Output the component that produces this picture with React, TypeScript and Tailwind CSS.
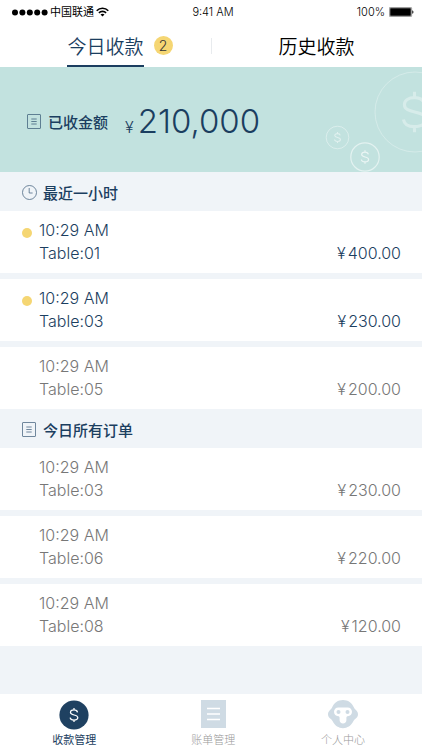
import React, { useState } from 'react';

interface Order {
  time: string;
  table: string;
  amount: string;
  isNew?: boolean;
}

const recentOrders: Order[] = [
  { time: '10:29 AM', table: 'Table:01', amount: '400.00', isNew: true },
  { time: '10:29 AM', table: 'Table:03', amount: '230.00', isNew: true },
  { time: '10:29 AM', table: 'Table:05', amount: '200.00' },
];

const todayOrders: Order[] = [
  { time: '10:29 AM', table: 'Table:03', amount: '230.00' },
  { time: '10:29 AM', table: 'Table:06', amount: '220.00' },
  { time: '10:29 AM', table: 'Table:08', amount: '120.00' },
];

const DOLLAR = 'M4.2 -3.2C3.8 -5 2.2 -6 0 -6C-2.4 -6 -4.2 -4.9 -4.2 -3C-4.2 1 4.5 -1 4.5 3.1C4.5 5 2.7 6.1 0 6.1C-2.6 6.1 -4.3 5 -4.6 3.1M0 -8.4V-6M0 6.1V8.4';

function ListIcon() {
  return (
    <svg width="14" height="15" viewBox="0 0 14 15" fill="none" stroke="currentColor" className="opacity-75" aria-hidden="true">
      <rect x="0.5" y="0.5" width="13" height="14" rx="0.5" strokeWidth="0.8" />
      <path d="M4.3 5H9.7M4.3 7.5H9.7M4.3 10H9.7" strokeWidth="0.8" />
    </svg>
  );
}

function ClockIcon() {
  return (
    <svg width="15" height="15" viewBox="0 0 15 15" fill="none" stroke="currentColor" strokeWidth="0.8" className="opacity-75" aria-hidden="true">
      <circle cx="7.5" cy="7.5" r="7" />
      <path d="M7.2 3V8H10.6" />
    </svg>
  );
}

function StatusBar() {
  return (
    <div className="grid h-6 grid-cols-3 items-center pr-2 pl-3 text-[11px] text-black">
      <div className="flex items-center gap-0.5">
        <svg width="36" height="7" viewBox="0 0 36 7" aria-hidden="true">
          {[3, 10.4, 17.8, 25.2, 32.6].map((cx) => (
            <circle key={cx} cx={cx} cy="3.5" r="3" />
          ))}
        </svg>
        <span>中国联通</span>
        <svg width="13" height="10" viewBox="0 0 13 10" fill="none" stroke="currentColor" strokeWidth="1.6" aria-hidden="true">
          <path d="M0.7 3.7C3.9 0.4 9.1 0.4 12.3 3.7M2.9 5.9C4.9 3.9 8.1 3.9 10.1 5.9" />
          <path d="M4.5 7.4C5.7 6.4 7.3 6.4 8.5 7.4L6.5 9.6Z" fill="currentColor" stroke="none" />
        </svg>
      </div>
      <span className="text-center font-light">9:41 AM</span>
      <div className="flex items-center justify-end gap-1">
        <span className="font-light">100%</span>
        <svg width="25" height="10" viewBox="0 0 25 10" aria-hidden="true">
          <rect x="0.4" y="0.4" width="22.2" height="9.2" rx="0.8" fill="none" stroke="#777" strokeWidth="0.8" />
          <rect x="1.2" y="1.2" width="20.6" height="7.6" />
          <path d="M23.3 3.2C24.8 3.6 24.8 6.4 23.3 6.8Z" />
        </svg>
      </div>
    </div>
  );
}

function CoinPattern() {
  return (
    <svg className="absolute top-0 right-0" width="100" height="105" viewBox="0 0 100 105" fill="none" stroke="#fff" aria-hidden="true">
      <circle cx="93" cy="45" r="40" strokeOpacity="0.3" />
      <path d={DOLLAR} transform="translate(92.5 45) scale(2.4)" strokeOpacity="0.35" strokeWidth="1.3" />
      <circle cx="15.5" cy="70.5" r="11.3" strokeOpacity="0.4" />
      <path d={DOLLAR} transform="translate(15.5 70.5) scale(0.65)" strokeOpacity="0.5" strokeWidth="1.7" />
      <circle cx="43" cy="90" r="14.2" strokeOpacity="0.55" strokeWidth="1.2" />
      <path d={DOLLAR} transform="translate(43 90) scale(0.8)" strokeOpacity="0.65" strokeWidth="1.5" />
    </svg>
  );
}

function SectionTitle({ icon, title }: { icon: React.ReactNode; title: string }) {
  return (
    <h2 className="flex h-[39px] items-center pt-0.5 pl-[22px] text-[15px] font-medium text-[#1b3e60]">
      <span className="w-[21px]">{icon}</span>
      <span className="pt-1">{title}</span>
    </h2>
  );
}

function OrderList({ orders }: { orders: Order[] }) {
  return (
    <ul className="flex flex-col gap-1.5">
      {orders.map((order) => (
        <li
          key={order.table}
          className={`flex h-[62px] items-center bg-white pr-[21px] pl-[22px] text-base leading-[23px] font-light ${
            order.isNew ? 'text-[#1b3e60]' : 'text-[#777]'
          }`}
        >
          <div className="w-[17px] self-start pt-[17px]">
            {order.isNew && <div className="size-2.5 rounded-full bg-[#f5d673]"></div>}
          </div>
          <div className="flex-1">
            <p>{order.time}</p>
            <p>{order.table}</p>
          </div>
          <p className="flex gap-0.5 self-end pb-2">
            <span>¥</span>
            <span>{order.amount}</span>
          </p>
        </li>
      ))}
    </ul>
  );
}

const navItems = [
  {
    label: '收款管理',
    icon: (
      <svg width="30" height="30" viewBox="0 0 30 30" fill="none" aria-hidden="true">
        <circle cx="15" cy="15" r="14.6" fill="#1f4161" />
        <path d={DOLLAR} transform="translate(15 15) scale(0.84)" stroke="#fff" strokeWidth="1.5" />
      </svg>
    ),
  },
  {
    label: '账单管理',
    icon: (
      <svg width="30" height="30" viewBox="0 0 30 30" fill="none" aria-hidden="true">
        <rect x="3" y="0" width="25" height="28" fill="#cfdbe4" />
        <path d="M9 8.5H22M9 14H22M9 19.5H22" stroke="#fff" strokeWidth="1.3" />
      </svg>
    ),
  },
  {
    label: '个人中心',
    icon: (
      <svg width="30" height="30" viewBox="0 0 30 30" fill="none" aria-hidden="true">
        <path
          d="M15 0C20 0 24 2.8 25.8 7.2C26.4 8.6 27.4 9.3 28.4 10.4C29.5 11.6 30 12.8 30 14.3C30 16.3 28.9 17.8 27.2 19C26.2 19.7 25.8 20.5 25.2 21.6C23 25.8 19.4 28.2 15 28.2C10.6 28.2 7 25.8 4.8 21.6C4.2 20.5 3.8 19.7 2.8 19C1.1 17.8 0 16.3 0 14.3C0 12.8 0.5 11.6 1.6 10.4C2.6 9.3 3.6 8.6 4.2 7.2C6 2.8 10 0 15 0Z"
          fill="#cfdbe4"
        />
        <path
          d="M10.4 7.4H19.6C22.3 7.4 24 9.4 24 11.8C24 14.4 22.2 16.2 19.8 16.2C18.8 16.2 18.4 16.7 18.4 17.8V20.2C18.4 22.2 17 23.4 15 23.4C13 23.4 11.6 22.2 11.6 20.2V17.8C11.6 16.7 11.2 16.2 10.2 16.2C7.8 16.2 6 14.4 6 11.8C6 9.4 7.7 7.4 10.4 7.4Z"
          fill="#fff"
        />
        <circle cx="10.5" cy="12" r="2" fill="#cfdbe4" />
        <circle cx="19.5" cy="12" r="2" fill="#cfdbe4" />
      </svg>
    ),
  },
];

export default function App() {
  const [tab, setTab] = useState('today');
  const [page, setPage] = useState('收款管理');

  return (
    <div className="flex min-h-screen flex-col bg-[#f0f4f8] font-['Inter','Noto_Sans_CJK_SC',sans-serif]">
      <header className="bg-white">
        <StatusBar />
        <div className="relative grid h-[43px] grid-cols-2 text-[19px] font-[350]">
          <button
            type="button"
            onClick={() => setTab('today')}
            className={`flex justify-center ${tab === 'today' ? 'text-[#1b3e60]' : 'text-black'}`}
          >
            <span className={`relative flex h-full items-center border-b-2 pt-2 ${tab === 'today' ? 'border-[#1b3e60]' : 'border-transparent'}`}>
              今日收款
              <span className="absolute top-3 left-full ml-2.5 flex size-[19px] items-center justify-center rounded-full bg-[#f5d673] text-sm text-[#333]">
                2
              </span>
            </span>
          </button>
          <button
            type="button"
            onClick={() => setTab('history')}
            className={`flex justify-center ${tab === 'history' ? 'text-[#1b3e60]' : 'text-black'}`}
          >
            <span className={`flex h-full items-center border-b-2 pt-2 ${tab === 'history' ? 'border-[#1b3e60]' : 'border-transparent'}`}>
              历史收款
            </span>
          </button>
          <div className="absolute top-3.5 left-1/2 h-4 w-px bg-[#e8ebee]"></div>
        </div>
      </header>

      {/* Total received */}
      <section className="relative flex h-[105px] items-center bg-[#c2e2df] pt-1 pl-[27px] text-[#1b3e60]">
        <CoinPattern />
        <span className="w-[21px]">
          <ListIcon />
        </span>
        <span className="pt-1 text-[15px] font-medium">已收金额</span>
        <p className="flex items-baseline gap-1 pl-[17px] font-light">
          <span className="text-base">¥</span>
          <span className="text-[33px]">210,000</span>
        </p>
      </section>

      <main className="flex-1">
        <SectionTitle icon={<ClockIcon />} title="最近一小时" />
        <OrderList orders={recentOrders} />
        <SectionTitle icon={<ListIcon />} title="今日所有订单" />
        <OrderList orders={todayOrders} />
      </main>

      <nav className="grid h-14 grid-cols-[8fr_7fr_7fr] bg-white pr-3.5">
        {navItems.map((item) => (
          <button
            key={item.label}
            type="button"
            onClick={() => setPage(item.label)}
            className={`flex flex-col items-center pt-1.5 text-[11px] leading-5 ${
              page === item.label ? 'text-[#1b3e60]' : 'font-light text-[#999]'
            }`}
          >
            {item.icon}
            {item.label}
          </button>
        ))}
      </nav>
    </div>
  );
}
